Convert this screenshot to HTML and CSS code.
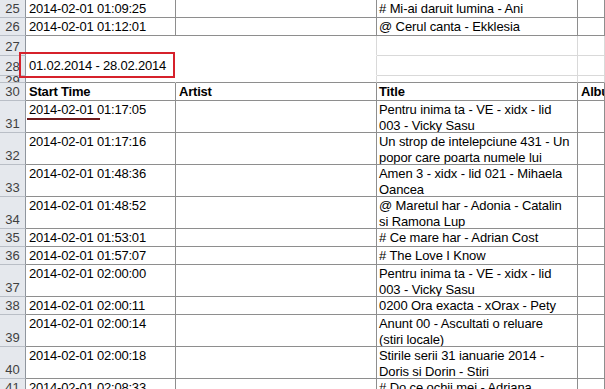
FILE: index.html
```html
<!DOCTYPE html>
<html>
<head>
<meta charset="utf-8">
<link rel="stylesheet" href="styles.css">
</head>
<body>
<div class="sheet">
  <div class="row s">
    <div class="cell rh">25</div><div class="cell">2014-02-01 01:09:25</div><div class="cell"></div><div class="cell ttl">&#35; Mi-ai daruit lumina - Ani</div><div class="cell"></div>
  </div>
  <div class="row s">
    <div class="cell rh">26</div><div class="cell">2014-02-01 01:12:01</div><div class="cell"></div><div class="cell ttl">@ Cerul canta - Ekklesia</div><div class="cell"></div>
  </div>
  <div class="row g27">
    <div class="cell rh">27</div><div class="cell blank"></div><div class="cell blank lr"></div><div class="cell light"></div><div class="cell light"></div>
  </div>
  <div class="row g28">
    <div class="cell rh">28</div><div class="cell blank bottom">01.02.2014 - 28.02.2014</div><div class="cell blank lr"></div><div class="cell light"></div><div class="cell light"></div>
  </div>
  <div class="row g29">
    <div class="cell rh rh-clip"><span>29</span></div><div class="cell blank dark-b"></div><div class="cell blank lr dark-b"></div><div class="cell light dark-b"></div><div class="cell light dark-b"></div>
  </div>
  <div class="row s hdr">
    <div class="cell rh">30</div><div class="cell">Start Time</div><div class="cell">Artist</div><div class="cell ttl">Title</div><div class="cell">Album</div>
  </div>
  <div class="row d">
    <div class="cell rh">31</div><div class="cell">2014-02-01 01:17:05</div><div class="cell"></div><div class="cell ttl">Pentru inima ta - VE - xidx - lid<br>003 - Vicky Sasu</div><div class="cell"></div>
  </div>
  <div class="row d">
    <div class="cell rh">32</div><div class="cell">2014-02-01 01:17:16</div><div class="cell"></div><div class="cell ttl">Un strop de intelepciune 431 - Un<br>popor care poarta numele lui</div><div class="cell"></div>
  </div>
  <div class="row d">
    <div class="cell rh">33</div><div class="cell">2014-02-01 01:48:36</div><div class="cell"></div><div class="cell ttl">Amen 3 - xidx - lid 021 - Mihaela<br>Oancea</div><div class="cell"></div>
  </div>
  <div class="row d">
    <div class="cell rh">34</div><div class="cell">2014-02-01 01:48:52</div><div class="cell"></div><div class="cell ttl">@ Maretul har - Adonia - Catalin<br>si Ramona Lup</div><div class="cell"></div>
  </div>
  <div class="row s">
    <div class="cell rh">35</div><div class="cell">2014-02-01 01:53:01</div><div class="cell"></div><div class="cell ttl">&#35; Ce mare har - Adrian Cost</div><div class="cell"></div>
  </div>
  <div class="row s">
    <div class="cell rh">36</div><div class="cell">2014-02-01 01:57:07</div><div class="cell"></div><div class="cell ttl">&#35; The Love I Know</div><div class="cell"></div>
  </div>
  <div class="row d">
    <div class="cell rh">37</div><div class="cell">2014-02-01 02:00:00</div><div class="cell"></div><div class="cell ttl">Pentru inima ta - VE - xidx - lid<br>003 - Vicky Sasu</div><div class="cell"></div>
  </div>
  <div class="row s">
    <div class="cell rh">38</div><div class="cell">2014-02-01 02:00:11</div><div class="cell"></div><div class="cell ttl">0200 Ora exacta - xOrax - Pety</div><div class="cell"></div>
  </div>
  <div class="row d">
    <div class="cell rh">39</div><div class="cell">2014-02-01 02:00:14</div><div class="cell"></div><div class="cell ttl">Anunt 00 - Ascultati o reluare<br>(stiri locale)</div><div class="cell"></div>
  </div>
  <div class="row d">
    <div class="cell rh">40</div><div class="cell">2014-02-01 02:00:18</div><div class="cell"></div><div class="cell ttl">Stirile serii 31 ianuarie 2014 -<br>Doris si Dorin - Stiri</div><div class="cell"></div>
  </div>
  <div class="row s">
    <div class="cell rh">41</div><div class="cell">2014-02-01 02:08:33</div><div class="cell"></div><div class="cell ttl">&#35; Do ce ochii mei - Adriana</div><div class="cell"></div>
  </div>

  <div class="mark-box"></div>
  <div class="mark-line"></div>
</div>
</body>
</html>
```
FILE: styles.css
```css
html, body {
  margin: 0;
  padding: 0;
  background: #ffffff;
  overflow: hidden;
}

.sheet {
  position: relative;
  width: 605px;
  height: 389px;
  overflow: hidden;
  font-family: "Liberation Sans", Arial, sans-serif;
  font-size: 13px;
  letter-spacing: -0.2px;
  color: #000000;
}

.row {
  display: grid;
  grid-template-columns: 26px 150px 201px 201px 1fr;
  box-sizing: border-box;
}

.row.s { height: 18px; }
.row.d { height: 32px; }
.row.g27 { height: 20px; }
.row.g28 { height: 20px; }
.row.g29 { height: 7px; }

.cell {
  box-sizing: border-box;
  border-right: 1px solid #8e8e8e;
  border-bottom: 1px solid #8e8e8e;
  overflow: hidden;
  white-space: nowrap;
  padding: 0 0 0 3px;
  line-height: 17px;
}

.cell.ttl {
  letter-spacing: -0.1px;
  padding-left: 2px;
}

.row.d .cell {
  line-height: 16px;
  padding-top: 1px;
}

.cell.rh {
  background: #e5e8ed;
  border-right-color: #8f959d;
  border-bottom-color: #b9bec6;
  color: #3f3f3f;
  display: flex;
  align-items: flex-end;
  justify-content: center;
  padding: 0;
  letter-spacing: 0;
}

.row.d .cell.rh {
  padding-top: 0;
  line-height: 16px;
}

.rh-clip {
  align-items: flex-start !important;
}
.rh-clip span {
  display: block;
  line-height: 13px;
  margin-top: -2px;
}

.hdr .cell {
  font-weight: bold;
}
.hdr .cell.rh {
  font-weight: normal;
}

.cell.blank {
  border-right-color: transparent;
  border-bottom-color: transparent;
}
.cell.blank.lr {
  border-right-color: #d9d9d9;
}
.cell.light {
  border-right-color: #d9d9d9;
  border-bottom-color: #d9d9d9;
}
.cell.dark-b {
  border-bottom-color: #8e8e8e;
}
.cell.bottom {
  display: flex;
  align-items: flex-end;
  padding-bottom: 1px;
}

.mark-box {
  position: absolute;
  left: 19px;
  top: 52px;
  width: 156px;
  height: 26px;
  box-sizing: border-box;
  border: 2px solid #d6212b;
}

.mark-line {
  position: absolute;
  left: 27px;
  top: 118px;
  width: 73px;
  height: 2px;
  background: #6e1a1c;
}
```
